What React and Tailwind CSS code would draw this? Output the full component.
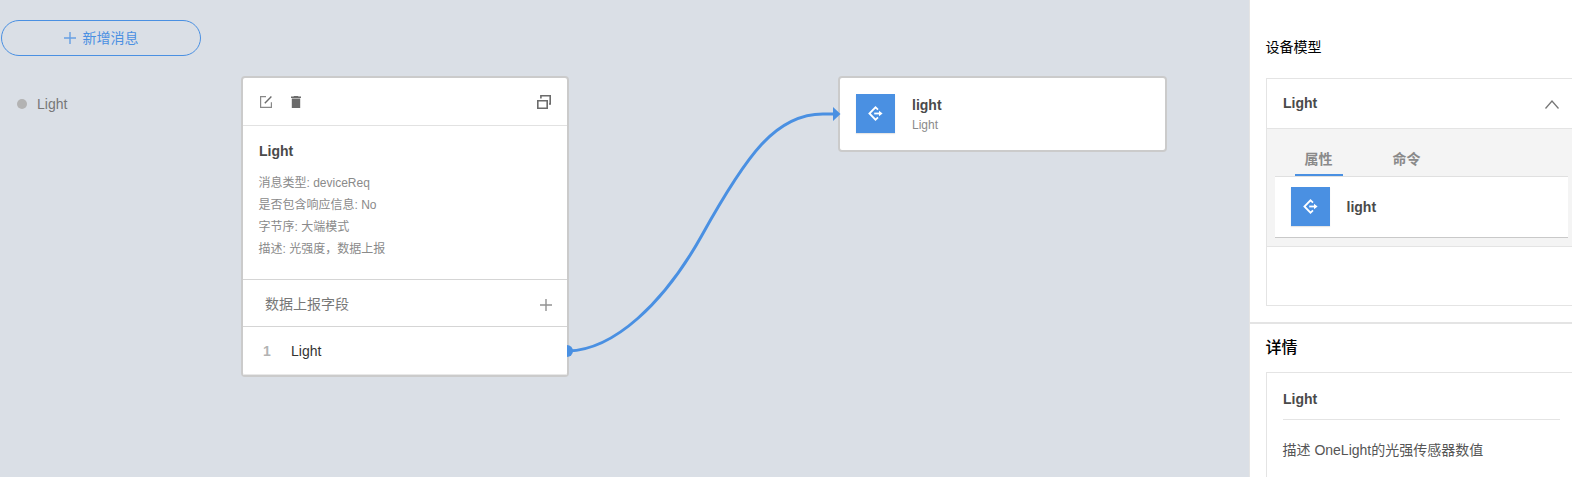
import React from "react";

function PlusIcon({ className }) {
  return (
    <svg viewBox="0 0 12 12" className={className} fill="none" stroke="currentColor" strokeWidth="1.4" strokeOpacity="0.8">
      <path d="M6 0V12M0 6H12" />
    </svg>
  );
}

function EditIcon() {
  return (
    <svg width="12" height="12" viewBox="0 0 12 12" fill="none">
      <path d="M6 0.6H0.6V11.4H11.4V6.2" stroke="#888" strokeWidth="1.2" />
      <path d="M4.8 7.2L11.4 0.6" stroke="#6b6b6b" strokeWidth="1.4" />
    </svg>
  );
}

function TrashIcon() {
  return (
    <svg width="10" height="12" viewBox="0 0 10 12" fill="#6b6b6b">
      <path d="M3 0H7L7.5 0.6H10V2H0V0.6H2.5ZM0.8 2.6H9.2V12H0.8Z" />
    </svg>
  );
}

function WindowsIcon() {
  return (
    <svg width="14" height="14" viewBox="0 0 14 14" fill="none" stroke="#6b6b6b" strokeWidth="1.6">
      <path d="M3.9 3.6V0.8H13.2V9H12" />
      <path d="M0.8 5.8H10.2V13.2H0.8Z" />
    </svg>
  );
}

function PropertyTile() {
  return (
    <div className="flex size-[39px] shrink-0 items-center justify-center bg-[#4a90e2] shadow-[0_1px_1px_#e6e6e6]">
      <svg width="15" height="15" viewBox="0 0 15 15" fill="none" stroke="#fff" strokeWidth="1.8">
        <path d="M10 3.6L7.5 1.3L1.4 7.5L7.5 13.7L10 11.4" />
        <path d="M6.2 7.5H12.5" />
        <path d="M11 4.8L14.6 7.5L11 10.2Z" fill="#fff" stroke="none" />
      </svg>
    </div>
  );
}

const META = [
  "消息类型: deviceReq",
  "是否包含响应信息: No",
  "字节序: 大端模式",
  "描述: 光强度，数据上报",
];

function MessageCard() {
  return (
    <div className="absolute left-[241px] top-[76px] flex h-[301px] w-[328px] flex-col rounded border-2 border-[#cbcbcb] bg-white">
      <div className="flex h-12 items-center border-b border-[#e2e2e2] pl-[17px] pr-4">
        <EditIcon />
        <span className="ml-[19px]">
          <TrashIcon />
        </span>
        <span className="ml-auto">
          <WindowsIcon />
        </span>
      </div>
      <div className="h-[154px] border-b border-[#d5d5d5] px-4 pt-[15px]">
        <div className="h-5 text-sm font-bold text-[#4a4a4a]">Light</div>
        <div className="-ml-[0.5px] mt-[11px] text-xs leading-[22px] text-[#8a8a8a]">
          {META.map((line) => (
            <div key={line}>{line}</div>
          ))}
        </div>
      </div>
      <div className="flex h-[47px] items-center justify-between border-b border-[#d5d5d5] pl-[22px] pr-[15px] pt-[3px] text-sm text-[#777]">
        <span className="-mt-px">数据上报字段</span>
        <PlusIcon className="size-3" />
      </div>
      <div className="flex h-12 items-center border-b border-[#e8e8e8] pl-5 text-sm">
        <span className="w-[28px] font-bold text-[#b3b3b3]">1</span>
        <span className="text-[#333]">Light</span>
      </div>
    </div>
  );
}

function PropertyCard() {
  return (
    <div className="absolute left-[838px] top-[76px] flex h-[76px] w-[329px] rounded border-2 border-[#cbcbcb] bg-white pl-4 pt-4">
      <PropertyTile />
      <div className="ml-[17px]">
        <div className="h-5 pt-px text-sm font-bold text-[#4a4a4a]">light</div>
        <div className="pt-px text-xs leading-5 text-[#8a8a8a]">Light</div>
      </div>
    </div>
  );
}

function Canvas() {
  return (
    <main className="relative h-full flex-1 overflow-hidden bg-[#dadfe6]">
      <div className="flex w-[201px] flex-col pl-px pt-5">
        <button className="flex h-9 items-center justify-center gap-[7px] rounded-full border border-[#4a90e2] text-sm text-[#4a90e2]">
          <PlusIcon className="size-3" />
          <span>新增消息</span>
        </button>
        <div className="mt-[38px] flex h-5 items-center gap-[10px] pl-4 text-sm text-[#777]">
          <span className="size-[10px] rounded-full bg-[#b3b3b3]" />
          Light
        </div>
      </div>
      <MessageCard />
      <PropertyCard />
      <svg className="absolute left-[567px] top-[100px]" width="280" height="260" viewBox="567 100 280 260">
        <g fill="#4a90e2">
          <path d="M567 345A6 6 0 0 1 567 357Z" />
          <path d="M833 107L840.5 114L833 121Z" />
        </g>
        <path
          d="M568 351C614 350 664 303 701.5 236C747 154 776 114 823 114H834"
          fill="none"
          stroke="#4a90e2"
          strokeWidth="3"
        />
      </svg>
    </main>
  );
}

function SidePanel() {
  return (
    <aside className="h-full w-[323px] overflow-hidden border-l border-[#e4e4e4] bg-white">
      <section className="h-[324px] border-b-2 border-[#e4e4e4] pl-4 pt-[37px]">
        <h2 className="-ml-[0.5px] text-sm leading-5 text-black">设备模型</h2>
        <div className="mt-[21px] h-[228px] border-y border-l border-[#e4e4e4]">
          <div className="flex h-[50px] items-center justify-between border-b border-[#e4e4e4] pl-4 pr-[13px]">
            <span className="-mt-0.5 text-sm font-bold text-[#4a4a4a]">Light</span>
            <svg width="14" height="9" viewBox="0 0 14 9" fill="none" stroke="#777" strokeWidth="1.3" className="mt-0.5">
              <path d="M0.5 8.5L7 1L13.5 8.5" />
            </svg>
          </div>
          <div className="h-[118px] border-b border-[#e4e4e4] bg-[#f4f4f4] pl-2 pr-1 pt-[13px]">
            <div className="flex h-[34px] gap-10 pl-5 text-sm font-bold text-[#8a8a8a]">
              <div className="flex w-12 justify-center border-b-2 border-[#4a90e2] pr-px pt-[7px]">属性</div>
              <div className="flex w-12 justify-center pr-px pt-[7px]">命令</div>
            </div>
            <div className="flex h-[62px] border-b border-t border-b-[#c9c9c9] border-t-[#e0e0e0] bg-white pl-4 pt-[10px]">
              <PropertyTile />
              <span className="ml-[16.5px] mt-[10px] text-sm font-bold text-[#4a4a4a]">light</span>
            </div>
          </div>
        </div>
      </section>
      <section className="pl-4 pt-3">
        <h2 className="-ml-[0.5px] text-base font-medium text-black">详情</h2>
        <div className="mt-3 h-[140px] border-l border-t border-[#e4e4e4] pl-4 pr-3">
          <div className="flex h-[47px] items-center border-b border-[#e4e4e4] pt-[5px] text-sm font-bold text-[#4a4a4a]">Light</div>
          <p className="-ml-[0.5px] mt-5 text-sm text-[#555]">描述 OneLight的光强传感器数值</p>
        </div>
      </section>
    </aside>
  );
}

export default function App() {
  return (
    <div className="flex h-[477px] w-[1572px] overflow-hidden font-['Liberation_Sans','Noto_Sans_CJK_SC',sans-serif]">
      <Canvas />
      <SidePanel />
    </div>
  );
}
